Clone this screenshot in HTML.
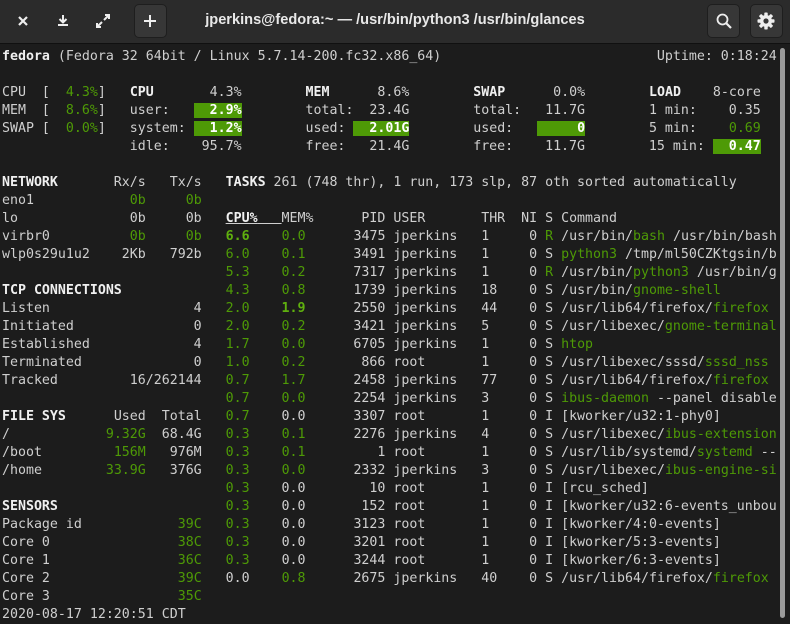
<!DOCTYPE html>
<html><head><meta charset="utf-8"><style>
html,body{margin:0;padding:0;width:790px;height:622px;overflow:hidden;background:#1c1c1c;}
.hb{position:absolute;left:0;top:0;width:790px;height:43px;background:#2b2b2b;border-bottom:1px solid #101010;}
.btn{position:absolute;top:4px;width:33px;height:34px;border-radius:5px;background:#373737;border:1px solid #1e1e1e;box-sizing:border-box;}
.title{position:absolute;left:0;width:790px;top:12px;text-align:center;font:bold 14.6px "Liberation Sans",sans-serif;color:#e8e8e8;}
svg{position:absolute;}
pre{position:absolute;left:2px;top:48px;margin:0;width:775px;overflow:hidden;font-family:"DejaVu Sans Mono","Liberation Mono",monospace;font-size:13.28px;line-height:18px;color:#cfcfcf;}
b{color:#f0f0f0;font-weight:bold;}
.g{color:#4e9a06;}
.gb{color:#5fb00e;font-weight:bold;}
.x{background:#4e9a06;color:#fff;font-weight:bold;}
.sb{position:absolute;left:780px;top:48px;width:5px;height:570px;border-radius:3px;background:#9a9a9a;}
</style></head><body>
<div class="hb"></div>
<svg style="left:16px;top:14px" width="14" height="14" viewBox="0 0 14 14"><path d="M3 3L11 11M11 3L3 11" stroke="#eee" stroke-width="2.2"/></svg>
<svg style="left:56px;top:13px" width="14" height="16" viewBox="0 0 14 16"><path d="M7 2V9M3.5 6L7 9.5 10.5 6" stroke="#eee" stroke-width="2" fill="none"/><rect x="2" y="11" width="10" height="2" fill="#eee"/></svg>
<svg style="left:95px;top:13px" width="16" height="16" viewBox="0 0 16 16"><path d="M9 7L14 2M10 2H14V6M7 9L2 14M2 10V14H6" stroke="#eee" stroke-width="2" fill="none"/></svg>
<div class="btn" style="left:134px"></div>
<svg style="left:143px;top:14px" width="14" height="14" viewBox="0 0 14 14"><path d="M7 1V13M1 7H13" stroke="#eee" stroke-width="2"/></svg>
<div class="title">jperkins@fedora:~ — /usr/bin/python3 /usr/bin/glances</div>
<div class="btn" style="left:707px"></div>
<svg style="left:715px;top:12px" width="18" height="18" viewBox="0 0 18 18"><circle cx="7.5" cy="7.5" r="5" stroke="#eee" stroke-width="1.8" fill="none"/><path d="M11 11L16 16" stroke="#eee" stroke-width="2.2"/></svg>
<div class="btn" style="left:750px"></div>
<svg style="left:757px;top:12px" width="18" height="18" viewBox="0 0 18 18"><g fill="#eee"><circle cx="9" cy="9" r="6"/><rect x="7.3" y="0.5" width="3.4" height="17" rx="0.8"/><rect x="7.3" y="0.5" width="3.4" height="17" rx="0.8" transform="rotate(45 9 9)"/><rect x="7.3" y="0.5" width="3.4" height="17" rx="0.8" transform="rotate(90 9 9)"/><rect x="7.3" y="0.5" width="3.4" height="17" rx="0.8" transform="rotate(135 9 9)"/></g><circle cx="9" cy="9" r="2.6" fill="#373737"/></svg>
<pre><b>fedora</b> (Fedora 32 64bit / Linux 5.7.14-200.fc32.x86_64)                           Uptime: 0:18:24

CPU  [  <span class="g">4.3%</span>]   <b>CPU</b>       4.3%        <b>MEM</b>      8.6%        <b>SWAP</b>      0.0%        <b>LOAD</b>    8-core
MEM  [  <span class="g">8.6%</span>]   user:   <span class="x">  2.9%</span>        total:  23.4G        total:   11.7G        1 min:    0.35
SWAP [  <span class="g">0.0%</span>]   system: <span class="x">  1.2%</span>        used: <span class="x">  2.01G</span>        used:   <span class="x">     0</span>        5 min:    <span class="g">0.69</span>
                idle:    95.7%        free:   21.4G        free:    11.7G        15 min: <span class="x">  0.47</span>

<b>NETWORK</b>       Rx/s   Tx/s   <b>TASKS</b> 261 (748 thr), 1 run, 173 slp, 87 oth sorted automatically
eno1            <span class="g">0b</span>     <span class="g">0b</span>
lo              0b     0b   <u><b>CPU%</b>   </u>MEM%      PID USER       THR  NI S Command
virbr0          <span class="g">0b</span>     <span class="g">0b</span>   <span class="gb">6.6</span>    <span class="g">0.0</span>      3475 jperkins   1     0 <span class="g">R</span> /usr/bin/<span class="g">bash</span> /usr/bin/bash
wlp0s29u1u2    2Kb   792b   <span class="g">6.0</span>    <span class="g">0.1</span>      3491 jperkins   1     0 S <span class="g">python3</span> /tmp/ml50CZKtgsin/b
                            <span class="g">5.3</span>    <span class="g">0.2</span>      7317 jperkins   1     0 <span class="g">R</span> /usr/bin/<span class="g">python3</span> /usr/bin/g
<b>TCP CONNECTIONS</b>             <span class="g">4.3</span>    <span class="g">0.8</span>      1739 jperkins   18    0 S /usr/bin/<span class="g">gnome-shell</span>
Listen                  4   <span class="g">2.0</span>    <span class="gb">1.9</span>      2550 jperkins   44    0 S /usr/lib64/firefox/<span class="g">firefox</span>
Initiated               0   <span class="g">2.0</span>    <span class="g">0.2</span>      3421 jperkins   5     0 S /usr/libexec/<span class="g">gnome-terminal</span>
Established             4   <span class="g">1.7</span>    <span class="g">0.0</span>      6705 jperkins   1     0 S <span class="g">htop</span>
Terminated              0   <span class="g">1.0</span>    <span class="g">0.2</span>       866 root       1     0 S /usr/libexec/sssd/<span class="g">sssd_nss</span>
Tracked         16/262144   <span class="g">0.7</span>    <span class="g">1.7</span>      2458 jperkins   77    0 S /usr/lib64/firefox/<span class="g">firefox</span>
                            <span class="g">0.7</span>    <span class="g">0.0</span>      2254 jperkins   3     0 S <span class="g">ibus-daemon</span> --panel disable
<b>FILE SYS</b>      Used  Total   <span class="g">0.7</span>    0.0      3307 root       1     0 I [kworker/u32:1-phy0]
/            <span class="g">9.32G</span>  68.4G   <span class="g">0.3</span>    <span class="g">0.1</span>      2276 jperkins   4     0 S /usr/libexec/<span class="g">ibus-extension</span>
/boot         <span class="g">156M</span>   976M   <span class="g">0.3</span>    <span class="g">0.1</span>         1 root       1     0 S /usr/lib/systemd/<span class="g">systemd</span> --
/home        <span class="g">33.9G</span>   376G   <span class="g">0.3</span>    <span class="g">0.0</span>      2332 jperkins   3     0 S /usr/libexec/<span class="g">ibus-engine-si</span>
                            <span class="g">0.3</span>    0.0        10 root       1     0 I [rcu_sched]
<b>SENSORS</b>                     <span class="g">0.3</span>    0.0       152 root       1     0 I [kworker/u32:6-events_unbou
Package id            <span class="g">39C</span>   <span class="g">0.3</span>    0.0      3123 root       1     0 I [kworker/4:0-events]
Core 0                <span class="g">38C</span>   <span class="g">0.3</span>    0.0      3201 root       1     0 I [kworker/5:3-events]
Core 1                <span class="g">36C</span>   <span class="g">0.3</span>    0.0      3244 root       1     0 I [kworker/6:3-events]
Core 2                <span class="g">39C</span>   0.0    <span class="g">0.8</span>      2675 jperkins   40    0 S /usr/lib64/firefox/<span class="g">firefox</span>
Core 3                <span class="g">35C</span>
2020-08-17 12:20:51 CDT</pre>
<div class="sb"></div>
</body></html>
